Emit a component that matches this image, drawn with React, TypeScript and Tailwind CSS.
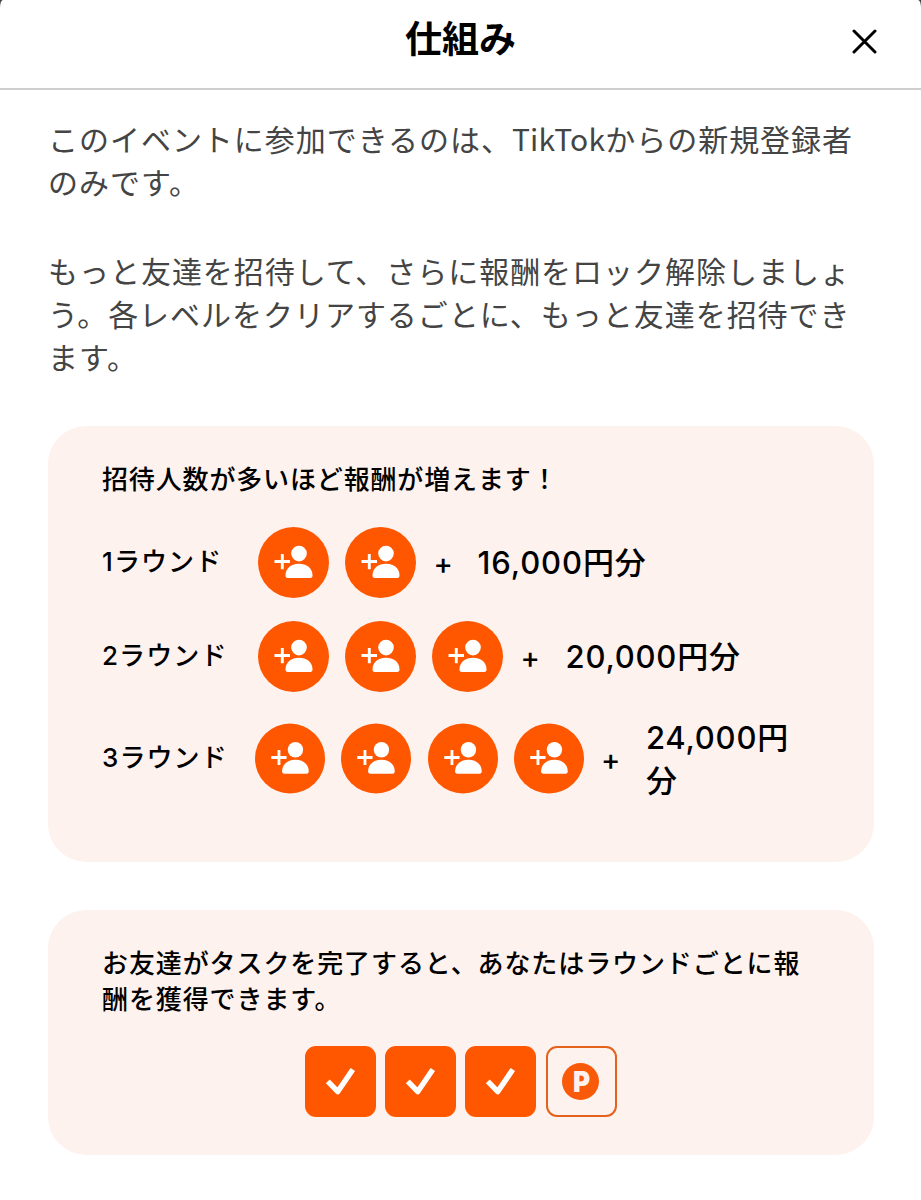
import React from 'react';

const rounds = [
  {
    label: '1ラウンド',
    friends: 2,
    amount: ['16,000円分'],
    rowClass: 'h-[71px]',
    labelClass: 'w-[155.5px] tracking-[1.1px]',
    circleClass: 'w-[71px] h-[71px]',
    listClass: 'gap-[16px]',
    plusClass: 'ml-[18px] w-[44px]',
    amountClass: 'tracking-[0.9px]',
  },
  {
    label: '2ラウンド',
    friends: 3,
    amount: ['20,000円分'],
    rowClass: 'h-[71px] mt-[23px]',
    labelClass: 'w-[155.5px] tracking-[1.1px]',
    circleClass: 'w-[71px] h-[71px]',
    listClass: 'gap-[16px]',
    plusClass: 'ml-[18px] w-[45px]',
    amountClass: 'tracking-[0.8px]',
  },
  {
    label: '3ラウンド',
    friends: 4,
    amount: ['24,000円', '分'],
    rowClass: 'h-[87px] mt-[23px]',
    labelClass: 'w-[153px] tracking-[1.1px]',
    circleClass: 'w-[70px] h-[71px]',
    listClass: 'gap-[16.3px]',
    plusClass: 'ml-[17px] w-[45px]',
    amountClass: 'tracking-[0.8px]',
  },
];

const AddFriendIcon = () => (
  <svg viewBox="0 0 71 71" className="w-full h-full" fill="none">
    <circle cx="35.5" cy="35.5" r="35.5" fill="#ff5700" />
    <circle cx="41" cy="26.6" r="7.8" fill="#fff" />
    <path d="M27.5 48.5C27.5 41 33.5 36.8 41 36.8S54.5 41 54.5 48.5C54.5 50 53.8 50.9 52.3 50.9H29.7C28.2 50.9 27.5 50 27.5 48.5Z" fill="#fff" />
    <path d="M24.3 27V42.2M16.5 34.5H32" stroke="#fff" strokeWidth="2.9" />
  </svg>
);

const CheckTile = () => (
  <div className="w-[71px] h-[71px] rounded-[11px] bg-[#ff5700]">
    <svg viewBox="0 0 71 71" className="w-full h-full" fill="none">
      <path d="M22.8 35.3L32.8 45.6L47.8 23.5" stroke="#fff" strokeWidth="5.4" strokeLinejoin="round" />
    </svg>
  </div>
);

const App = () => {
  return (
    <div lang="ja" className="w-[921px] h-[1200px] overflow-hidden bg-[#444] font-['Inter','Noto_Sans_CJK_JP',sans-serif] text-black">
      <div className="h-full bg-white rounded-t-[3px_8px]">
        <header className="grid grid-cols-[1fr_auto_1fr] items-center h-[90px] pb-[8px] border-b-2 border-[#cfcfcf]">
          <span />
          <h1 className="text-[37px] leading-[54px] font-bold">仕組み</h1>
          <button className="justify-self-end mr-[44px] mt-[2px]" aria-label="閉じる">
            <svg width="25" height="25" viewBox="0 0 25 25" fill="none" stroke="#000" strokeWidth="3" strokeLinecap="round">
              <path d="M2 2L23 23M23 2L2 23" />
            </svg>
          </button>
        </header>

        <main className="px-[48px] pt-[27px]">
          <div className="font-['Noto_Sans_CJK_JP',sans-serif] text-[30px] leading-[43px] tracking-[0.97px] text-[#444] whitespace-nowrap">
            <p>
              このイベントに参加できるのは、<span className="tracking-[0.2px]">TikTok</span>からの新規登録者<br />
              のみです。
            </p>
            <p className="mt-[46px]">
              もっと友達を招待して、さらに報酬をロック解除しましょ<br />
              う。各レベルをクリアするごとに、もっと友達を招待でき<br />
              ます。
            </p>
          </div>

          <section className="mt-[48px] w-[826px] h-[436px] rounded-[38px] bg-[#fef2ee] px-[54px] pt-[36px]">
            <h2 className="text-[26px] leading-[36px] tracking-[0.85px] font-medium whitespace-nowrap">招待人数が多いほど報酬が増えます！</h2>
            <div className="mt-[29px]">
              {rounds.map((round) => (
                <div key={round.label} className={`flex items-center ${round.rowClass}`}>
                  <span className={`shrink-0 pb-[2px] text-[26px] leading-[36px] font-medium whitespace-nowrap ${round.labelClass}`}>{round.label}</span>
                  <div className={`flex shrink-0 ${round.listClass}`}>
                    {Array.from({ length: round.friends }, (_, i) => (
                      <div key={i} className={round.circleClass}>
                        <AddFriendIcon />
                      </div>
                    ))}
                  </div>
                  <span className={`shrink-0 pt-[3px] text-[29px] leading-[36px] font-medium ${round.plusClass}`}>+</span>
                  <span className={`text-[31px] leading-[43px] font-medium whitespace-nowrap ${round.amountClass}`}>
                    {round.amount.map((line) => (
                      <span key={line} className="block">{line}</span>
                    ))}
                  </span>
                </div>
              ))}
            </div>
          </section>

          <section className="mt-[48px] w-[826px] h-[245px] rounded-[38px] bg-[#fef2ee] px-[54px] pt-[36px]">
            <p className="text-[26px] leading-[36px] tracking-[0.9px] font-medium whitespace-nowrap">
              お友達がタスクを完了すると、あなたはラウンドごとに報<br />
              酬を獲得できます。
            </p>
            <div className="mt-[28px] ml-[203px] flex gap-[9.2px]">
              <CheckTile />
              <CheckTile />
              <CheckTile />
              <div className="flex items-center justify-center w-[71px] h-[71px] rounded-[11px] border-2 border-[#e5621c]">
                <span className="flex items-center justify-center w-[37px] h-[37px] mr-[2px] rounded-full bg-[#f95a0a] pl-[2px] text-[#fff2ee] text-[29px] leading-none font-black">
                  <span className="scale-x-90">P</span>
                </span>
              </div>
            </div>
          </section>
        </main>
      </div>
    </div>
  );
};

export default App;
